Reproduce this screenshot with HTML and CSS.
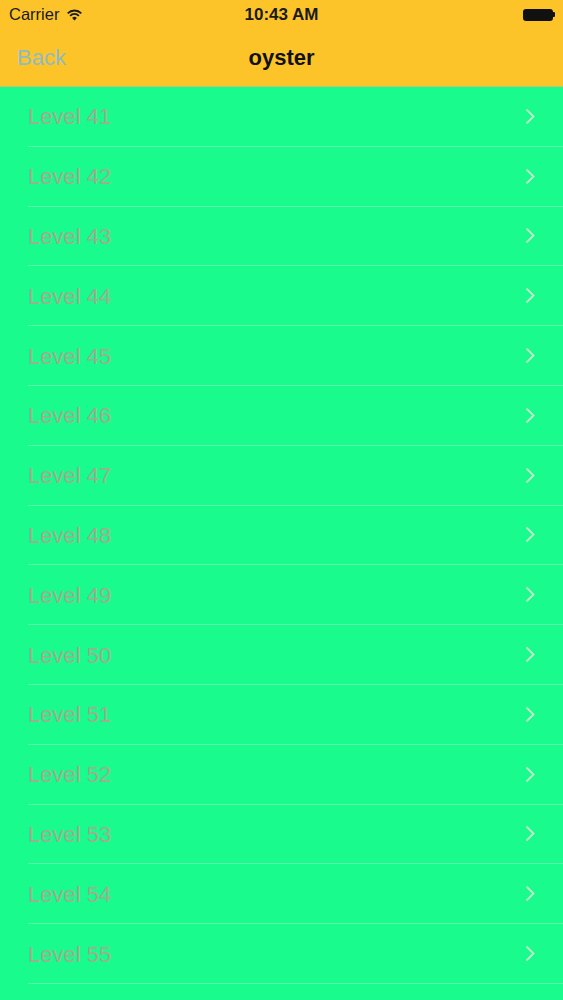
FILE: index.html
```html
<!DOCTYPE html>
<html lang="en">

<head>
    <meta charset="UTF-8">
    <meta name="viewport" content="width=device-width, initial-scale=1.0">
    <title>oyster</title>
    <link rel="stylesheet" href="styles.css">
</head>

<body>
    <header class="top">
        <div class="status-bar">
            <div class="status-left">
                <span>Carrier</span>
                <svg class="wifi" width="17" height="12" viewBox="0 0 16 12">
                    <path d="M8 11.5 L5.6 8.9 A3.4 3.4 0 0 1 10.4 8.9 Z" fill="#1a1a1a"/>
                    <path d="M3.6 6.8 A6.2 6.2 0 0 1 12.4 6.8" stroke="#1a1a1a" stroke-width="1.8" fill="none"/>
                    <path d="M1.2 4.3 A9.6 9.6 0 0 1 14.8 4.3" stroke="#1a1a1a" stroke-width="1.8" fill="none"/>
                </svg>
            </div>
            <span class="time">10:43 AM</span>
            <div class="battery">
                <div class="battery-body"></div>
                <div class="battery-tip"></div>
            </div>
        </div>
        <nav class="nav-bar">
            <span class="back">Back</span>
            <h1 class="title">oyster</h1>
        </nav>
    </header>

    <ul class="levels" id="levels"></ul>

    <script>
        const list = document.getElementById('levels');
        for (let i = 41; i <= 55; i++) {
            const li = document.createElement('li');
            li.className = 'level';
            li.innerHTML = `<span class="level-name">Level ${i}</span>
                <svg class="chevron" width="10" height="17" viewBox="0 0 10 17">
                    <path d="M1.5 1.5 L8.5 8.5 L1.5 15.5" stroke="#c3e8cc" stroke-width="1.8" fill="none"/>
                </svg>`;
            list.appendChild(li);
        }
    </script>
</body>

</html>
```

FILE: styles.css
```css
body {
    margin: 0;
    padding: 0;
    font-family: "Liberation Sans", Arial, sans-serif;
    background-color: #19fb8c;
    overflow: hidden;
}

.top {
    background-color: #fdc42a;
    border-bottom: 1px solid #b8c86a;
}

.status-bar {
    height: 29px;
    display: flex;
    align-items: center;
    justify-content: space-between;
    padding: 0 8px 0 9px;
    font-size: 16.5px;
    color: #1a1a1a;
    position: relative;
}

.status-left {
    display: flex;
    align-items: center;
    gap: 7px;
}

.time {
    position: absolute;
    left: 0;
    right: 0;
    text-align: center;
    font-weight: bold;
    font-size: 17px;
}

.battery {
    display: flex;
    align-items: center;
}

.battery-body {
    width: 30px;
    height: 12px;
    background-color: #111;
    border-radius: 3px;
}

.battery-tip {
    width: 2px;
    height: 5px;
    background-color: #111;
    border-radius: 0 1px 1px 0;
}

.nav-bar {
    height: 57px;
    display: flex;
    align-items: center;
    justify-content: center;
    position: relative;
}

.back {
    position: absolute;
    left: 17px;
    font-size: 22px;
    color: #8fbcc4;
}

.title {
    margin: 0;
    font-size: 22px;
    font-weight: bold;
    color: #111;
}

.levels {
    list-style: none;
    margin: 0;
    padding: 0;
}

.level {
    height: 58.8px;
    margin-left: 28px;
    padding-right: 28px;
    display: flex;
    align-items: center;
    justify-content: space-between;
    border-bottom: 1px solid #5cf4aa;
}

.level-name {
    font-size: 22px;
    color: #a3ab8f;
    padding-top: 2px;
}
```
